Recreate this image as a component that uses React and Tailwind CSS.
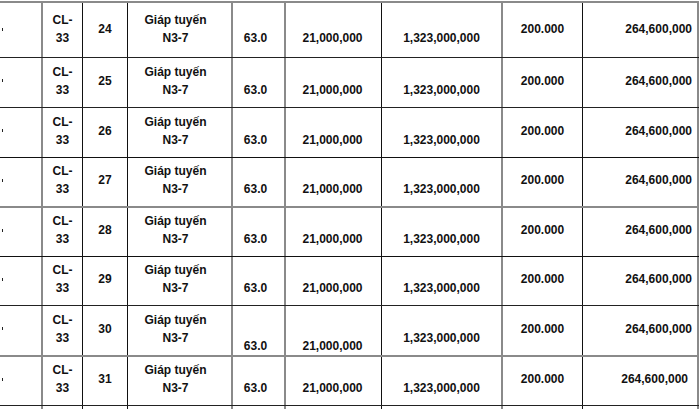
const COLS = [
  'w-[43px] border-r-2 border-[#8a8a8a]',
  'w-[40px] border-r border-[#111]',
  'w-[45px] border-r border-[#111]',
  'w-[105px] border-r-2 border-[#8a8a8a]',
  'w-[53px] border-r-2 border-[#8a8a8a]',
  'w-[96px] border-r border-[#111]',
  'w-[121px] border-r-2 border-[#8a8a8a]',
  'w-[80px] border-r border-[#111]',
  'w-[116px] border-r-2 border-[#8a8a8a]',
];

// row heights include the bottom line
const ROWS = [
  { stt: 24, h: 'h-[55px]', line: 'border-b border-[#222]', pad: 'pb-[2px]' },
  { stt: 25, h: 'h-[50px]', line: 'border-b border-[#222]' },
  { stt: 26, h: 'h-[50px]', line: 'border-b border-[#111]' },
  { stt: 27, h: 'h-[50px]', line: 'border-b-2 border-[#8a8a8a]' },
  { stt: 28, h: 'h-[49px]', line: 'border-b border-[#111]' },
  { stt: 29, h: 'h-[49px]', line: 'border-b border-[#222]' },
  { stt: 30, h: 'h-[51px]', line: 'border-b-2 border-[#8a8a8a]', low: true },
  { stt: 31, h: 'h-[49px]', line: 'border-b border-[#222]', tight: true },
];

function Cell({ i, pad = 'pb-[4px]', className = '', children }) {
  return <div className={`${COLS[i]} flex shrink-0 flex-col ${pad} ${className}`}>{children}</div>;
}

function Row({ row }) {
  const pad = row.pad ?? 'pb-[4px]';
  const low = row.low ? 'justify-end pb-0' : `justify-center ${pad}`;
  return (
    <div className={`flex ${row.h} ${row.line}`}>
      <Cell i={0} pad={pad} className="justify-center">
        <span className="ml-[2px] block h-[3px] w-[1px] bg-[#222]" />
      </Cell>
      <Cell i={1} pad={pad} className="justify-center text-center">
        <span>CL-</span>
        <span>33</span>
      </Cell>
      <Cell i={2} pad={pad} className="justify-center text-center">
        <span>{row.stt}</span>
      </Cell>
      <Cell i={3} pad={pad} className="justify-center pr-[8px] text-center">
        <span>Giáp tuyến</span>
        <span>N3-7</span>
      </Cell>
      <Cell i={4} pad="" className={`${low} pr-[6px] text-center`}>
        <span className="h-[18px] shrink-0" />
        <span>63.0</span>
      </Cell>
      <Cell i={5} pad="" className={`${low} pr-[2px] text-center`}>
        <span className="h-[18px] shrink-0" />
        <span>21,000,000</span>
      </Cell>
      <Cell i={6} pad={pad} className="justify-center text-center">
        <span className="h-[18px] shrink-0" />
        <span>1,323,000,000</span>
      </Cell>
      <Cell i={7} pad={pad} className="justify-center text-center">
        <span>200.000</span>
      </Cell>
      <Cell i={8} pad={pad} className={`justify-center text-right ${row.tight ? 'pr-[9px]' : 'pr-[5px]'}`}>
        <span>264,600,000</span>
      </Cell>
    </div>
  );
}

export default function App() {
  return (
    <div className="h-[409px] w-[700px] overflow-hidden bg-white pt-[1px] font-['Liberation_Sans',Arial,sans-serif] text-[12px] font-bold leading-[18px] text-[#111]">
      <div className="h-[2px] w-[699px] bg-[#8a8a8a]" />
      <div className="w-[699px]">
        {ROWS.map((row) => (
          <Row key={row.stt} row={row} />
        ))}
        <div className="flex h-[6px]">
          {COLS.map((c, i) => (
            <div key={i} className={`${c} shrink-0`} />
          ))}
        </div>
      </div>
    </div>
  );
}
